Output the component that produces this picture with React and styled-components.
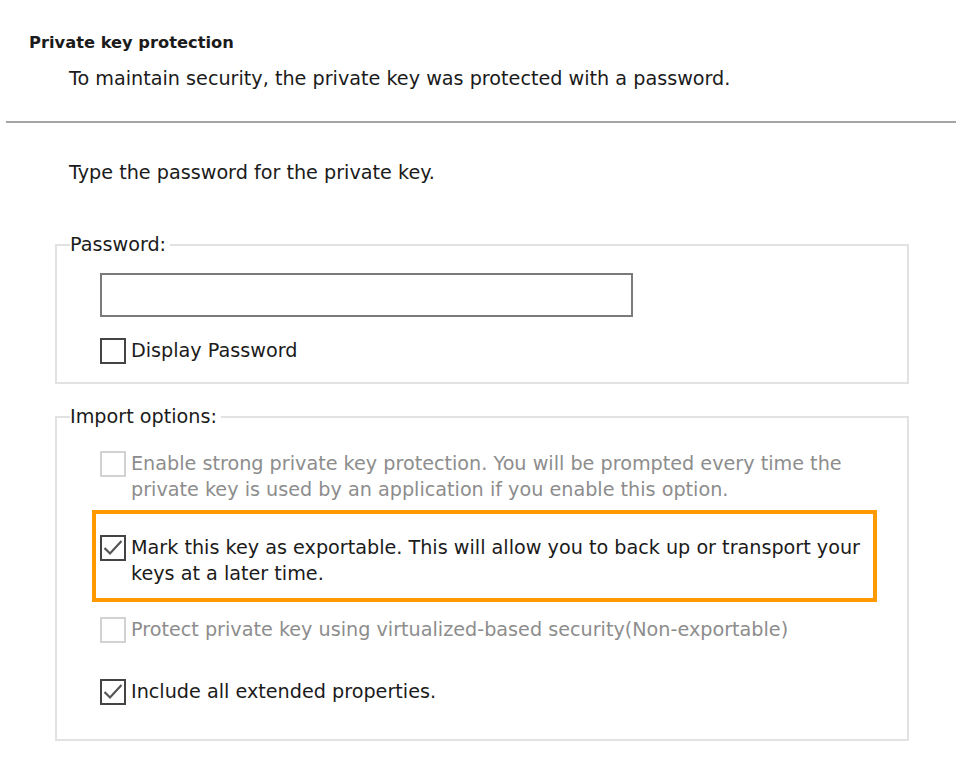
import styled, { createGlobalStyle } from "styled-components";

const GlobalStyle = createGlobalStyle`
  body {
    margin: 0;
    background: #ffffff;
    font-family: "DejaVu Sans", "Noto Sans", sans-serif;
    color: #1b1b1b;
  }
`;

function CheckMark() {
  return (
    <svg width="22" height="22" viewBox="0 0 22 22">
      <polyline
        points="2.5,11 8,16.5 19.5,4"
        fill="none"
        stroke="#555555"
        strokeWidth="2.2"
      />
    </svg>
  );
}

function Option({ checked, disabled, children }) {
  return (
    <Row $disabled={disabled}>
      <Box $disabled={disabled}>{checked && <CheckMark />}</Box>
      <Label>{children}</Label>
    </Row>
  );
}

export default function App() {
  return (
    <Page>
      <GlobalStyle />
      <Header>
        <Title>Private key protection</Title>
        <Subtitle>
          To maintain security, the private key was protected with a password.
        </Subtitle>
      </Header>
      <Divider />
      <Content>
        <Prompt>Type the password for the private key.</Prompt>
        <Group>
          <Legend>Password:</Legend>
          <GroupBody $gap={21}>
            <PasswordInput type="password" />
            <Option>Display Password</Option>
          </GroupBody>
        </Group>
        <ImportGroup>
          <Legend>Import options:</Legend>
          <GroupBody $gap={0}>
            <Option disabled>
              Enable strong private key protection. You will be prompted every time the
              <br />
              private key is used by an application if you enable this option.
            </Option>
            <Highlight>
              <Option checked>
                Mark this key as exportable. This will allow you to back up or transport your
                <br />
                keys at a later time.
              </Option>
            </Highlight>
            <Option disabled>
              Protect private key using virtualized-based security(Non-exportable)
            </Option>
            <Spaced>
              <Option checked>Include all extended properties.</Option>
            </Spaced>
          </GroupBody>
        </ImportGroup>
      </Content>
    </Page>
  );
}

const Page = styled.div`
  width: 962px;
  height: 760px;
  overflow: hidden;
  font-size: 19.2px;
`;

const Header = styled.div`
  padding: 30px 0 0 29px;
`;

const Title = styled.div`
  font-weight: 700;
  font-size: 16.3px;
  line-height: 26px;
`;

const Subtitle = styled.div`
  margin-top: 10px;
  padding-left: 40px;
  line-height: 26px;
`;

const Divider = styled.hr`
  margin: 29px 6px 0 6px;
  border: none;
  height: 2px;
  background: #a5a5a5;
`;

const Content = styled.div`
  padding: 0 53px 0 55px;
`;

const Prompt = styled.div`
  margin-top: 37px;
  padding-left: 14px;
  line-height: 26px;
`;

const Group = styled.fieldset`
  margin: 46px 0 0 0;
  padding: 0 13px;
  border: 2px solid #e2e2e2;
`;

const ImportGroup = styled(Group)`
  margin-top: 20px;
`;

const GroupBody = styled.div`
  display: flex;
  flex-direction: column;
  gap: ${(p) => p.$gap}px;
  padding: ${(p) => (p.$gap ? "15px 7px 18px 30px" : "21px 7px 34px 30px")};
`;

const Legend = styled.legend`
  margin-left: 0;
  padding: 0 4px 0 0;
  line-height: 26px;
`;

const PasswordInput = styled.input`
  width: 533px;
  height: 44px;
  box-sizing: border-box;
  border: 2px solid #7a7a7a;
  outline: none;
  margin: 0;
`;

const Row = styled.div`
  display: flex;
  align-items: flex-start;
  gap: 5px;
  color: ${(p) => (p.$disabled ? "#8d8d8d" : "#1b1b1b")};
`;

const Box = styled.span`
  flex: none;
  width: 26px;
  height: 26px;
  box-sizing: border-box;
  border: 2px solid ${(p) => (p.$disabled ? "#d2d2d2" : "#444444")};
  display: flex;
  align-items: center;
  justify-content: center;
`;

const Label = styled.div`
  line-height: 26px;
  white-space: nowrap;
`;

const Highlight = styled.div`
  margin: 7px 10px 15px -8px;
  padding: 21px 4px 11px 4px;
  border: 4px solid #ff9900;
`;

const Spaced = styled.div`
  margin-top: 36px;
`;
